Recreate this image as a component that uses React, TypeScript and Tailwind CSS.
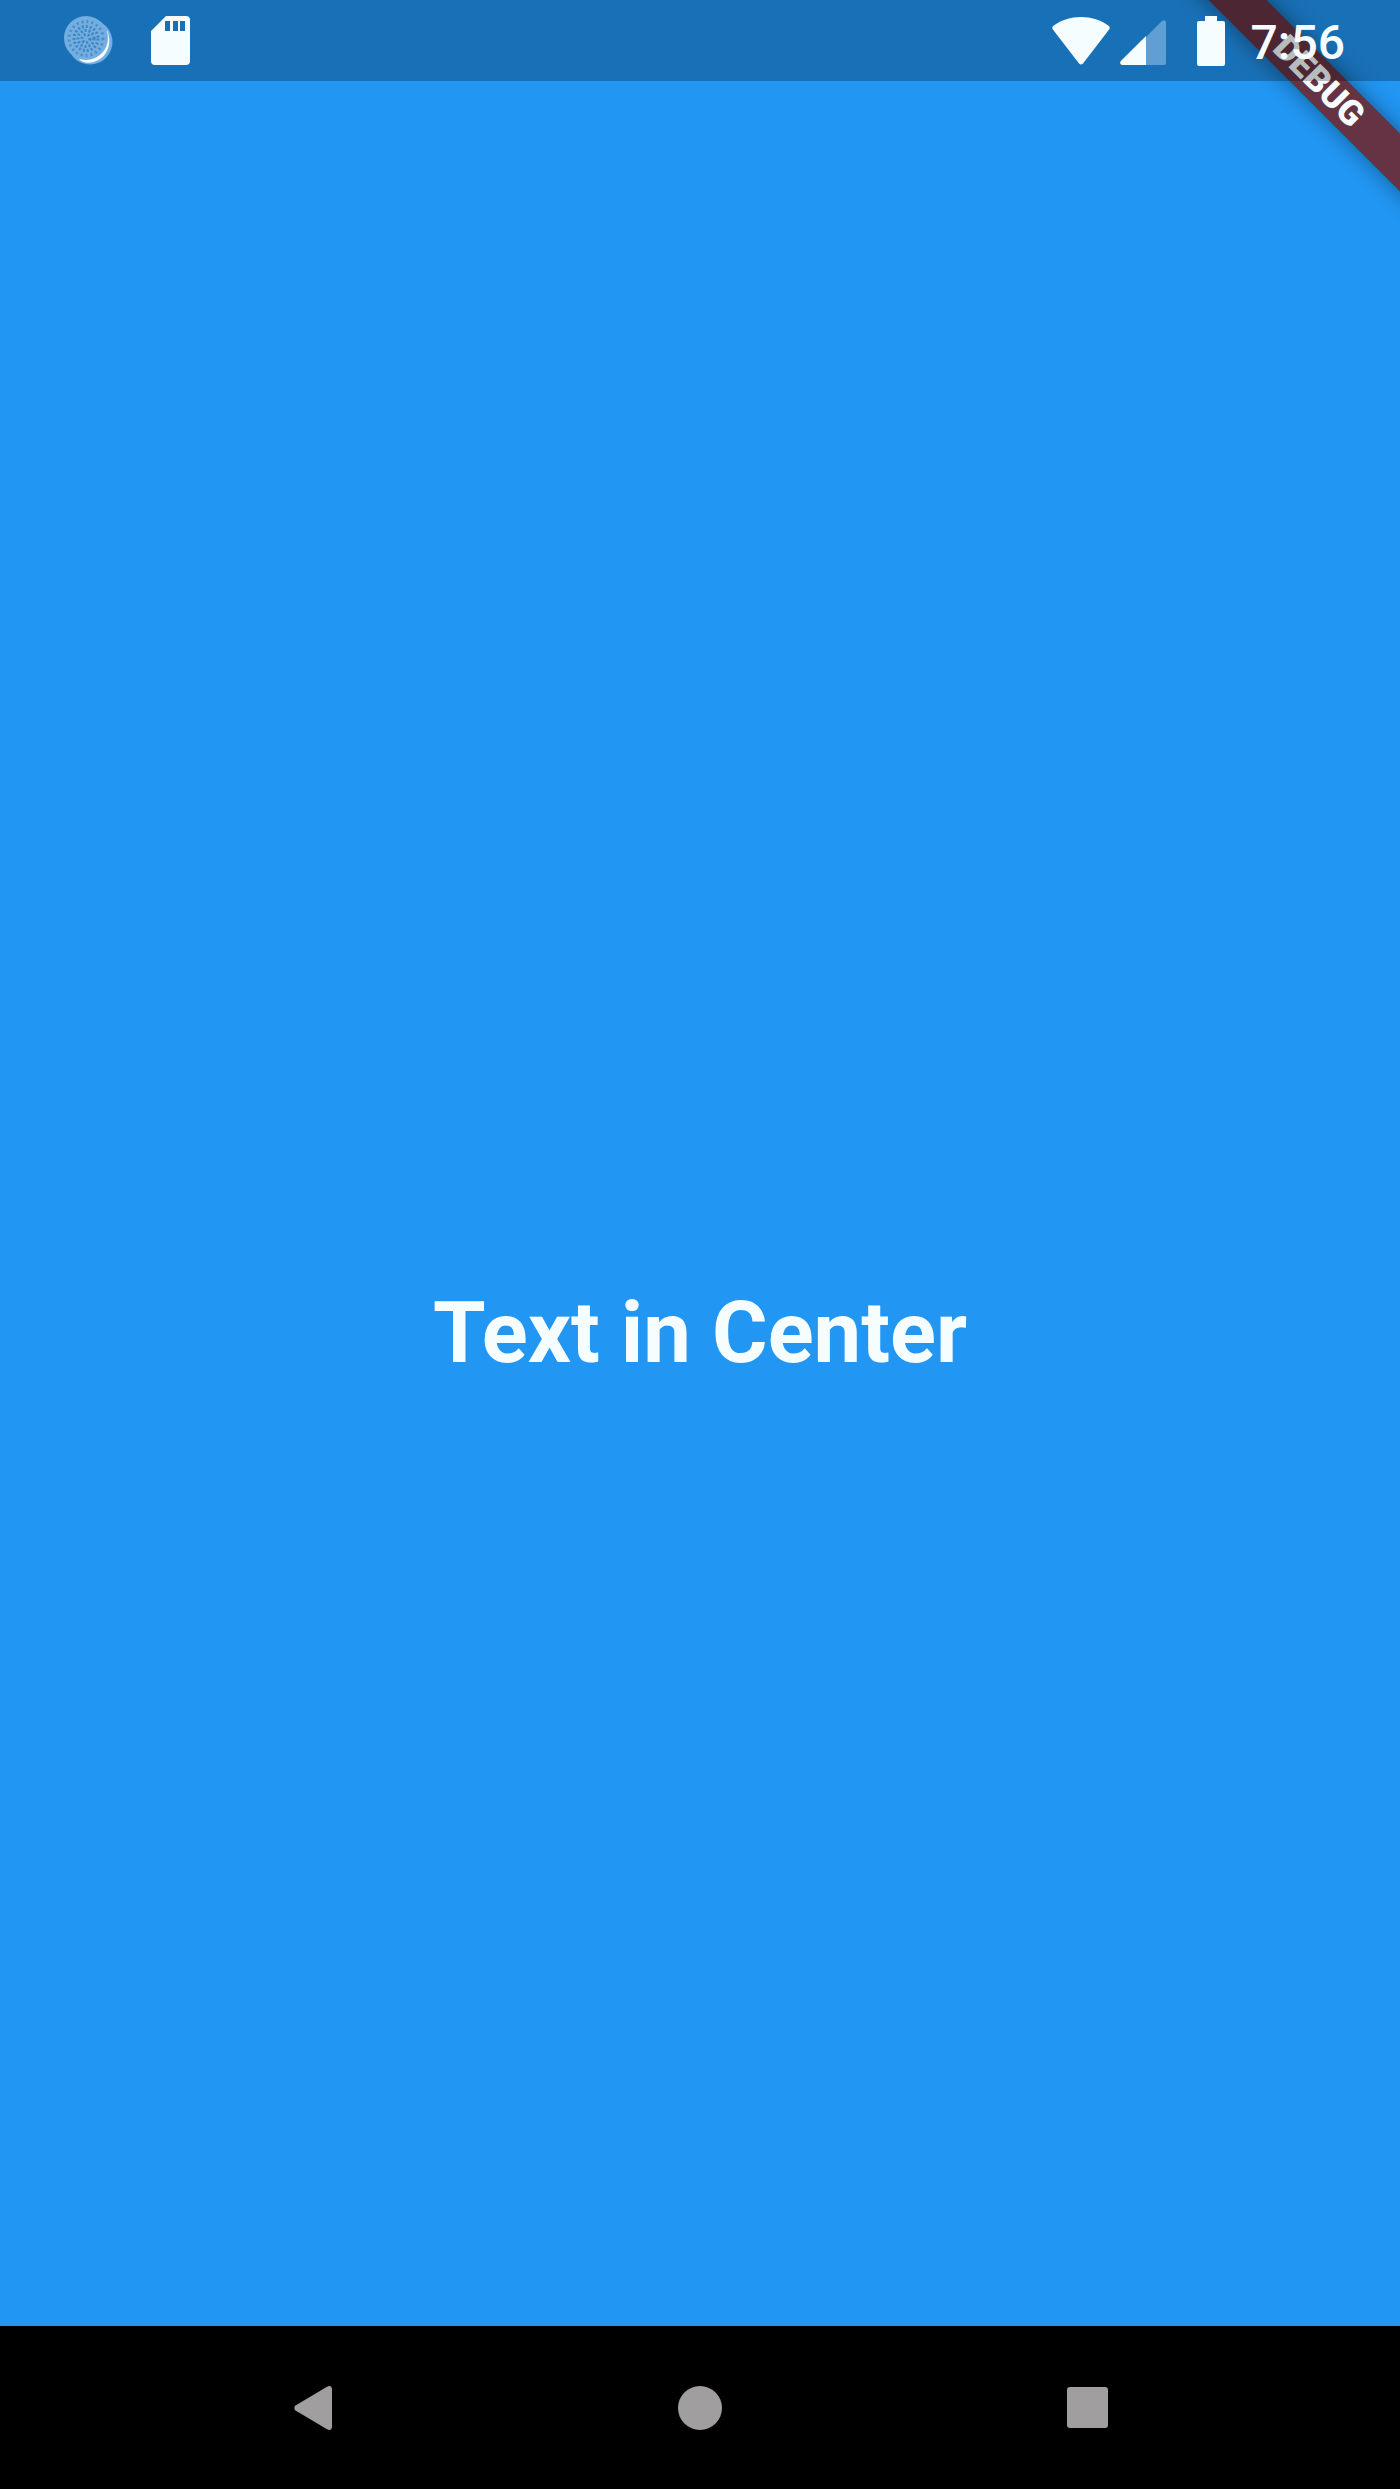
import React from "react";

function SyncIcon() {
  return (
    <svg width="49" height="49" viewBox="0 0 49 49" aria-hidden="true">
      <circle cx="26" cy="26" r="22.5" fill="#74aee0" />
      <path d="M43 14 C49 28 43 44 27 46.500 C23 47.300 18 46.500 15 43 L22 40 L38 30Z" fill="#f5fdff" />
      <circle cx="22" cy="22" r="22" fill="#74aee0" />
      <circle cx="22" cy="22.5" r="17" fill="none" stroke="#4a8fcb" strokeWidth="3" strokeDasharray="2 3" />
      <circle cx="22" cy="22.5" r="12" fill="none" stroke="#3c86c4" strokeWidth="3" strokeDasharray="2 2" />
      <circle cx="22" cy="22.5" r="8" fill="none" stroke="#3c86c4" strokeWidth="3" strokeDasharray="2 2" />
      <circle cx="22" cy="22.5" r="4" fill="none" stroke="#3c86c4" strokeWidth="3" strokeDasharray="2 2" />
    </svg>
  );
}

function SdCardIcon() {
  return (
    <svg width="39" height="49" viewBox="0 0 39 49" fill="#f5fdff" aria-hidden="true">
      <path
        fillRule="evenodd"
        d="M15 0H35a4 4 0 0 1 4 4V45a4 4 0 0 1-4 4H4a4 4 0 0 1-4-4V15ZM14 5V15H19V5ZM22 5V15H27V5ZM29 5V15H34V5Z"
      />
    </svg>
  );
}

function WifiIcon() {
  return (
    <svg width="58" height="48" viewBox="0 0 58 48" fill="#f5fdff" aria-hidden="true">
      <path d="M1 9C9 3 19 0 29 0S49 3 57 9Q58 10.500 57.500 12L31 46.500Q29 48.500 27 46.500L.5 12Q0 10.500 1 9Z" />
    </svg>
  );
}

function SignalIcon() {
  return (
    <svg width="46" height="45" viewBox="0 0 46 45" aria-hidden="true">
      <path d="M26 17 42 1Q46-1 46 3V43Q46 45 44 45H26Z" fill="#5f9fd3" />
      <path d="M26 16V45H2Q-1 44 .8 41Z" fill="#f5fdff" />
    </svg>
  );
}

function BatteryIcon() {
  return (
    <svg width="28" height="50" viewBox="0 0 28 50" fill="#f5fdff" aria-hidden="true">
      <path d="M8 0H20V5H26Q28 5 28 7V48Q28 50 26 50H2Q0 50 0 48V7Q0 5 2 5H8Z" />
    </svg>
  );
}

function StatusBar() {
  return (
    <header className="relative z-10 flex h-[81px] items-center justify-between bg-black/25 pr-[55px] pl-16">
      <div className="flex items-center gap-[38px]">
        <SyncIcon />
        <SdCardIcon />
      </div>
      <div className="flex items-center">
        <div className="flex items-end gap-[10px]">
          <WifiIcon />
          <SignalIcon />
        </div>
        <div className="mr-[26px] ml-[31px]">
          <BatteryIcon />
        </div>
        <time className="pt-1 text-[48px] leading-none font-medium">7:56</time>
      </div>
    </header>
  );
}

function DebugBanner() {
  return (
    <div className="pointer-events-none absolute top-0 right-0 flex size-[163px] items-center justify-center">
      <div className="flex h-[41px] w-[320px] shrink-0 rotate-45 items-center justify-center bg-[#663344] text-[35px] leading-none font-black shadow-[0_0_22px_rgba(0,0,0,0.4)]">
        DEBUG
      </div>
    </div>
  );
}

function NavigationBar() {
  return (
    <nav className="flex h-[163px] justify-center bg-black">
      <div className="grid w-[83%] grid-cols-3 place-items-center">
        <button type="button" aria-label="Back">
          <svg width="38" height="44" viewBox="0 0 38 44" fill="#a09e9f" aria-hidden="true">
            <path d="M33 .8Q38-1.500 38 4V40Q38 45.500 33 43.200L1.500 24.500Q-1 22 1.500 19.500Z" />
          </svg>
        </button>
        <button type="button" aria-label="Home" className="size-11 rounded-full bg-[#a09e9f]" />
        <button type="button" aria-label="Overview" className="size-[41px] rounded-[3px] bg-[#a09e9f]" />
      </div>
    </nav>
  );
}

export default function App() {
  return (
    <div className="relative flex min-h-screen flex-col overflow-hidden bg-[#2196f3] font-['Roboto',sans-serif] text-[#f5fdff]">
      <DebugBanner />
      <StatusBar />
      <main className="flex flex-1 items-center justify-center pt-[259px]">
        <h1 className="text-[85px] leading-none font-bold">Text in Center</h1>
      </main>
      <NavigationBar />
    </div>
  );
}
